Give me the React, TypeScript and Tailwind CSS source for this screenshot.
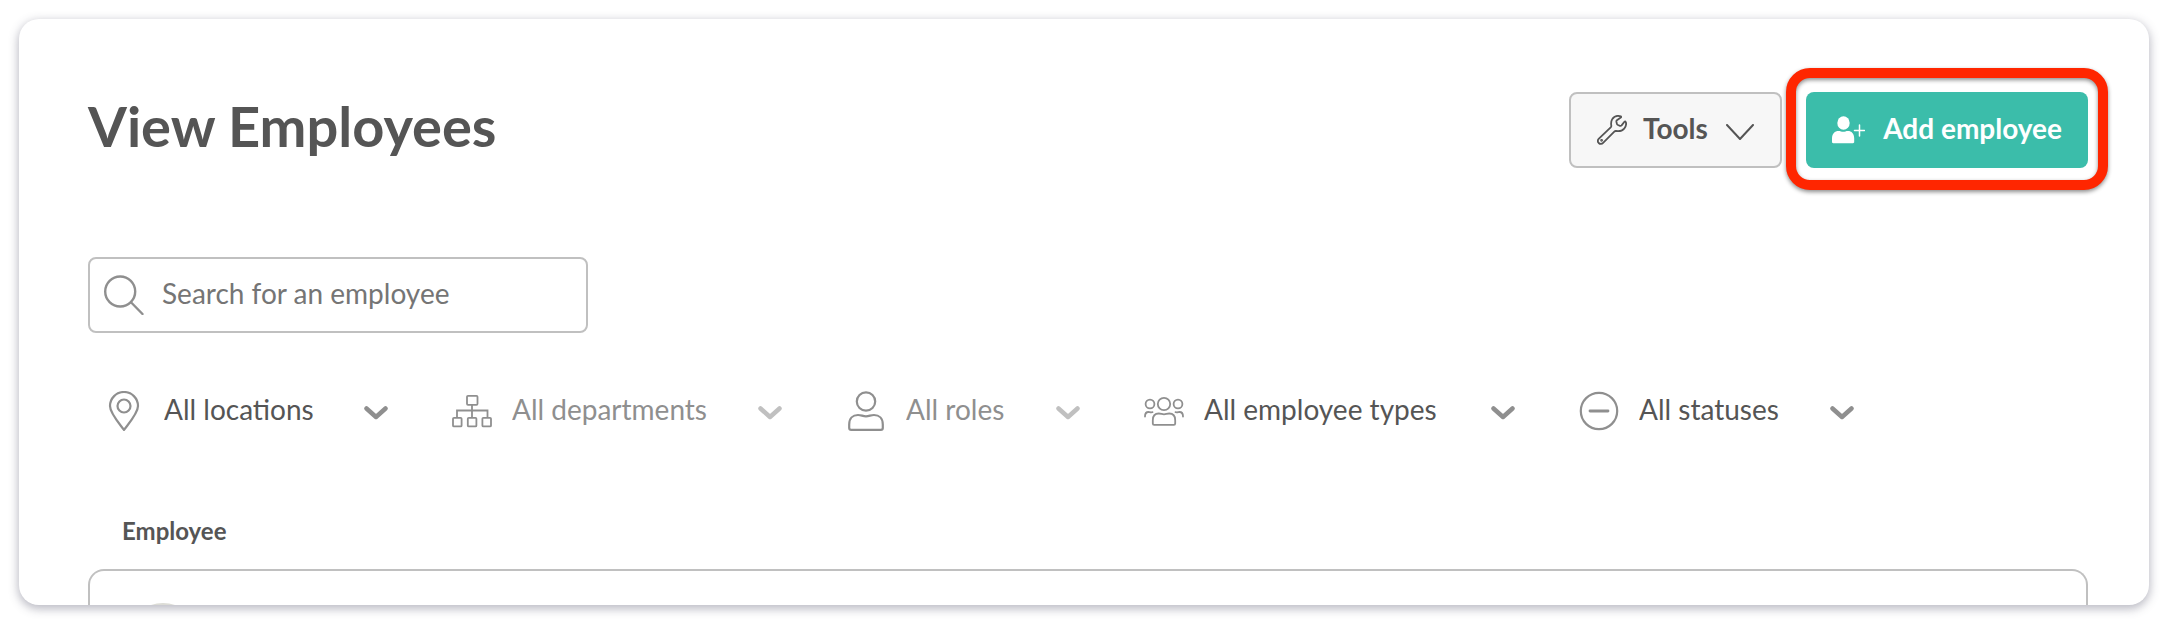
import type { ReactNode } from "react";

interface IconProps {
  className?: string;
}

interface FilterProps {
  id: string;
  label: string;
  width: string;
  icon: ReactNode;
  disabled?: boolean;
}

function WrenchIcon({ className }: IconProps) {
  return (
    <svg
      className={className}
      viewBox="0 0 30 30"
      fill="none"
      stroke="currentColor"
      strokeWidth="1.8"
      strokeLinecap="round"
      strokeLinejoin="round"
    >
      <path d="M23.800 1.400C20.500.3 16.900 1.500 15.100 4.400c-1.100 1.900-1.200 3.800-.8 6.200.1.700-.1 1.200-.6 1.700L1.900 23.700c-1.300 1.400-1.300 3.100-.2 4.300 1.300 1.300 3.200 1.200 4.400-.1L17.300 16.600c.5-.5 1-.7 1.700-.6 3.300.5 6.200-.1 8.200-2.400 1.700-2 2.300-4.400 1.600-6.500-.2-.7-.9-.8-1.400-.3l-2.800 3.600c-.5.500-1 .6-1.600.4l-2.100-.8c-.6-.2-.9-.5-1-1.100l-.5-2.200c-.1-.6 0-1 .5-1.400l3.900-2.700c.6-.4.500-1 0-1.200z" />
      <circle cx="4.600" cy="25.300" r=".5" fill="currentColor" />
    </svg>
  );
}

function AddPersonIcon({ className }: IconProps) {
  return (
    <svg className={className} viewBox="0 0 33 28" fill="currentColor">
      <ellipse cx="11.500" cy="7" rx="6.200" ry="6.800" />
      <path d="M0 26v-3.500C0 17.500 2.800 15 6.600 15c1.800 0 2.900.8 4.600.8s2.900-.8 4.600-.8c3.800 0 6.400 2.500 6.400 7.500V26c0 .7-.5 1.200-1.200 1.200H1.200C.5 27.200 0 26.700 0 26z" />
      <path
        d="M22.500 14.500h10M27.500 9v11"
        fill="none"
        stroke="currentColor"
        strokeWidth="1.500"
        strokeLinecap="round"
      />
    </svg>
  );
}

function SearchIcon({ className }: IconProps) {
  return (
    <svg
      className={className}
      viewBox="0 0 40 40"
      fill="none"
      stroke="currentColor"
      strokeWidth="2.400"
      strokeLinecap="round"
    >
      <circle cx="16.200" cy="16.500" r="15" />
      <path d="M27.200 27.500 38.500 39" />
    </svg>
  );
}

function PinIcon() {
  return (
    <svg className="size-10" viewBox="0 0 40 40" fill="none" stroke="currentColor" strokeWidth="2.200">
      <path
        d="M20 39C17 34.500 6 22.500 6 15a14 14 0 0 1 28 0c0 7.500-11 19.500-14 24z"
        strokeLinejoin="round"
      />
      <circle cx="20" cy="15" r="6.500" />
    </svg>
  );
}

function OrgChartIcon() {
  return (
    <svg className="size-10" viewBox="0 0 40 40" fill="none" stroke="currentColor" strokeWidth="1.800">
      <rect x="15" y="4.800" width="10.500" height="9" rx="1" />
      <rect x="1" y="26.800" width="8.600" height="8.600" rx="1" />
      <rect x="15.800" y="26.800" width="8.600" height="8.600" rx="1" />
      <rect x="30.400" y="26.800" width="8.600" height="8.600" rx="1" />
      <path d="M5 26.800v-7.300h30.500v7.300M20 13.800v13" />
    </svg>
  );
}

function PersonIcon() {
  return (
    <svg className="size-10" viewBox="0 0 40 40" fill="none" stroke="currentColor" strokeWidth="2.200">
      <circle cx="20" cy="10.500" r="9.200" />
      <path d="M3.200 37v-3.500C3.200 27.500 6.800 24 12 24c3.300 0 4.800 1.300 8 1.300s4.700-1.300 8-1.300c5.200 0 8.800 3.500 8.800 9.500V37c0 1.200-.7 1.900-1.900 1.900H5.100c-1.200 0-1.900-.7-1.900-1.900z" />
    </svg>
  );
}

function GroupIcon() {
  return (
    <svg
      className="size-10"
      viewBox="0 0 40 40"
      fill="none"
      stroke="currentColor"
      strokeWidth="1.800"
      strokeLinecap="round"
    >
      <circle cx="20" cy="13" r="6.200" />
      <circle cx="6" cy="13" r="4.400" />
      <circle cx="34" cy="13" r="4.400" />
      <path d="M8.800 32.500v-3.300c0-4.500 2.500-6.700 6-6.700 2.200 0 3.200.8 5.200.8s3-.8 5.200-.8c3.500 0 6 2.200 6 6.700v3.300c0 .8-.5 1.300-1.300 1.300H10.100c-.8 0-1.300-.5-1.300-1.300z" />
      <path d="M1 25.500C1 22.500 2.200 21 4.500 21c1 0 2 .6 4 .2M39 25.500c0-3-1.200-4.500-3.500-4.500-1 0-2 .6-4 .2" />
    </svg>
  );
}

function StatusIcon() {
  return (
    <svg className="size-10" viewBox="0 0 40 40" fill="none" stroke="currentColor" strokeLinecap="round">
      <circle cx="20" cy="20" r="18.200" strokeWidth="2.200" />
      <path d="M11 20h18" strokeWidth="2.800" />
    </svg>
  );
}

function Filter({ id, label, width, icon, disabled = false }: FilterProps) {
  return (
    <div className="flex items-center gap-5 text-[#8f8f8f]">
      <label htmlFor={id} aria-label={label} className="shrink-0">
        {icon}
      </label>
      <div className={`grid items-center ${width}`}>
        <select
          id={id}
          disabled={disabled}
          className={`col-start-1 row-start-1 w-full appearance-none bg-transparent pb-1 text-[28px] leading-9 opacity-100 ${
            disabled ? "text-[#8f8f8f]" : "text-[#555]"
          }`}
        >
          <option>{label}</option>
        </select>
        <svg
          className={`pointer-events-none col-start-1 row-start-1 mt-1 h-4 w-6 justify-self-end ${
            disabled ? "text-[#c0c0c0]" : "text-[#8f8f8f]"
          }`}
          viewBox="0 0 24 16"
          fill="none"
          stroke="currentColor"
          strokeWidth="4.500"
          strokeLinecap="round"
          strokeLinejoin="round"
        >
          <path d="M2.500 3.500 12 12l9.500-8.500" />
        </svg>
      </div>
    </div>
  );
}

export default function App() {
  return (
    <div className="bg-white p-[19px] font-[Lato,sans-serif] text-[#555]">
      <main className="overflow-hidden rounded-[20px] bg-white pt-[73px] pr-[61px] pl-[69px] shadow-[0_3px_10px_1px_rgba(60,60,85,0.35)]">
        {/* Page header */}
        <header className="flex items-center justify-between">
          <h1 className="pb-2 text-[56px] leading-[68px] font-bold">View Employees</h1>
          <div className="flex gap-6">
            <button
              type="button"
              className="flex h-[76px] w-[213px] items-center rounded-lg border-2 border-[#c0c0c0] bg-[#f7f7f7] px-[26px] text-[28px] font-bold"
            >
              <WrenchIcon className="size-[30px]" />
              <span className="ml-4 pb-1">Tools</span>
              <svg
                className="mt-1 ml-auto h-4 w-7"
                viewBox="0 0 28 16"
                fill="none"
                stroke="currentColor"
                strokeWidth="2"
                strokeLinecap="round"
                strokeLinejoin="round"
              >
                <path d="m1 1 13 14L27 1" />
              </svg>
            </button>
            <div className="relative">
              <button
                type="button"
                className="flex h-[76px] w-[282px] items-center justify-between rounded-lg bg-[#3bbdaa] px-[26px] text-[28px] font-bold text-white"
              >
                <AddPersonIcon className="h-7 w-[33px]" />
                <span className="pb-1">Add employee</span>
              </button>
              <div className="pointer-events-none absolute -inset-x-5 -top-6 -bottom-[22px] rounded-3xl border-10 border-[#ff2600] drop-shadow-[0_2px_2px_rgba(0,0,0,0.45)]" />
            </div>
          </div>
        </header>

        {/* Search */}
        <div className="mt-[89px] flex h-[76px] w-[500px] items-center gap-[18px] rounded-lg border-2 border-[#c0c0c0] pr-4 pl-[14px]">
          <label htmlFor="search" aria-label="Search for an employee">
            <SearchIcon className="size-10 text-[#8f8f8f]" />
          </label>
          <input
            id="search"
            type="text"
            placeholder="Search for an employee"
            className="min-w-0 flex-1 bg-transparent pb-1 text-[28px] outline-none placeholder:text-[#757575]"
          />
        </div>

        {/* Filters */}
        <div className="mt-[58px] flex gap-16 pl-4">
          <Filter id="locations" label="All locations" width="w-56" icon={<PinIcon />} />
          <Filter id="departments" label="All departments" width="w-[270px]" icon={<OrgChartIcon />} disabled />
          <Filter id="roles" label="All roles" width="w-[174px]" icon={<PersonIcon />} disabled />
          <Filter id="types" label="All employee types" width="w-[311px]" icon={<GroupIcon />} />
          <Filter id="statuses" label="All statuses" width="w-[215px]" icon={<StatusIcon />} />
        </div>

        {/* Employee list */}
        <section className="mt-[84px]">
          <h2 className="pl-[34px] text-2xl font-bold">Employee</h2>
          <div className="mt-[22px] h-9 overflow-hidden rounded-t-2xl border-2 border-b-0 border-[#c0c0c0] px-9 pt-8">
            <div className="size-[74px] rounded-full bg-[#dcdcd6]" />
          </div>
        </section>
      </main>
    </div>
  );
}
